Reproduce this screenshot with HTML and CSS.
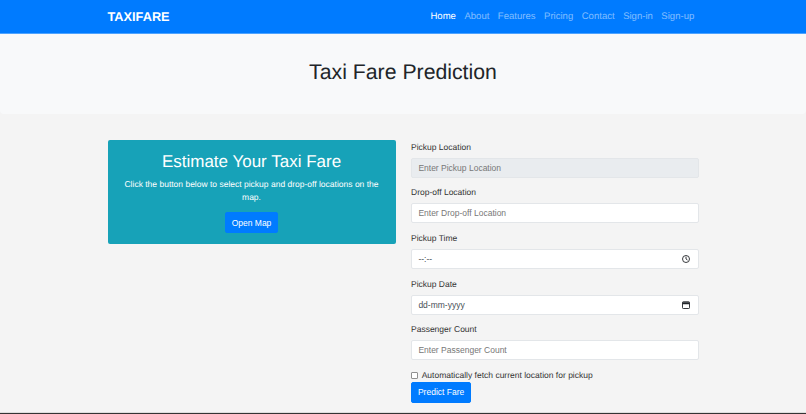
FILE: index.html
```html
<!DOCTYPE html>
<html lang="en">
<head>
	<meta charset="UTF-8">
	<title>Taxi Fare Prediction</title>
	<link rel="stylesheet" href="styles.css">
</head>
<body>
	<nav class="navbar">
		<div class="container nav-inner">
			<a class="brand" href="#">TAXIFARE</a>
			<ul class="nav-links">
				<li><a class="active" href="#">Home</a></li>
				<li><a href="#">About</a></li>
				<li><a href="#">Features</a></li>
				<li><a href="#">Pricing</a></li>
				<li><a href="#">Contact</a></li>
				<li><a href="#">Sign-in</a></li>
				<li><a href="#">Sign-up</a></li>
			</ul>
		</div>
	</nav>
	<header class="hero">
		<h1>Taxi Fare Prediction</h1>
	</header>
	<main class="container columns">
		<section class="estimate">
			<h2>Estimate Your Taxi Fare</h2>
			<p>Click the button below to select pickup and drop-off locations on the map.</p>
			<button type="button" class="btn">Open Map</button>
		</section>
		<form class="fare-form">
			<div class="form-group">
				<label for="pickup">Pickup Location</label>
				<input type="text" id="pickup" placeholder="Enter Pickup Location" disabled>
			</div>
			<div class="form-group">
				<label for="dropoff">Drop-off Location</label>
				<input type="text" id="dropoff" placeholder="Enter Drop-off Location">
			</div>
			<div class="form-group">
				<label for="time">Pickup Time</label>
				<div class="input-icon">
					<input type="text" id="time" value="--:--" readonly>
					<svg viewBox="0 0 16 16" width="8" height="8" fill="none" stroke="#212529" stroke-width="1.8">
						<circle cx="8" cy="8" r="7"/>
						<path d="M8 3.5V8l3 2"/>
					</svg>
				</div>
			</div>
			<div class="form-group">
				<label for="date">Pickup Date</label>
				<div class="input-icon">
					<input type="text" id="date" value="dd-mm-yyyy" readonly>
					<svg viewBox="0 0 16 16" width="8" height="8" fill="none" stroke="#212529" stroke-width="1.8">
						<rect x="1" y="1.5" width="14" height="13.5" rx="1.5"/>
						<path d="M1 4.5h14" stroke-width="4"/>
					</svg>
				</div>
			</div>
			<div class="form-group">
				<label for="count">Passenger Count</label>
				<input type="text" id="count" placeholder="Enter Passenger Count">
			</div>
			<div class="form-check">
				<input type="checkbox" id="auto">
				<label for="auto">Automatically fetch current location for pickup</label>
			</div>
			<button type="button" class="btn">Predict Fare</button>
		</form>
	</main>
	<footer class="footer"></footer>
</body>
</html>
```

FILE: styles.css
```css
html {
	font-size: 8.5px;
}
body {
	margin: 0;
	height: 414px;
	overflow: hidden;
	background-color: #f4f4f4;
	color: #333;
	font-family: "Liberation Sans", Arial, sans-serif;
	font-size: 1rem;
	line-height: 1.5;
	text-rendering: geometricPrecision;
}
.container {
	width: 591px;
	margin: 0 auto;
}
.navbar {
	height: 34px;
	background-color: #007bff;
	border-bottom: 1px solid #4da3ff;
	box-sizing: border-box;
}
.nav-inner {
	display: flex;
	align-items: center;
	justify-content: space-between;
	height: 33px;
}
.brand {
	color: #fff;
	font-size: 1.5rem;
	font-weight: bold;
	text-decoration: none;
}
.nav-links {
	display: flex;
	gap: 1rem;
	margin: 0;
	padding: 2px 0.5rem 0 0;
	list-style: none;
}
.nav-links a {
	color: rgba(255,255,255,0.5);
	font-size: 1.125rem;
	text-decoration: none;
}
.nav-links a.active {
	color: #fff;
}
.hero {
	padding: 3rem 0 29px;
	background-color: #f8f9fa;
	text-align: center;
	border-radius: 0 0 4px 4px;
}
.hero h1 {
	margin: 0;
	font-size: 2.5rem;
	font-weight: 400;
	line-height: 1.2;
	color: #212529;
}
.columns {
	display: grid;
	grid-template-columns: 288px 287.5px;
	gap: 15.5px;
	align-items: start;
	padding: 26px 0 9px;
}
.estimate {
	background-color: #17a2b8;
	color: #fff;
	text-align: center;
	border-radius: 2px;
	padding: 11.6px 1.25rem 1.25rem;
}
.estimate h2 {
	margin: 0 0 0.75rem;
	font-size: 2rem;
	font-weight: 400;
	line-height: 1.2;
}
.estimate p {
	margin: 0 0 1rem;
}
.btn {
	display: block;
	padding: 0.375rem 0.7rem;
	border: 0.5px solid #007bff;
	border-radius: 2px;
	background-color: #007bff;
	color: #fff;
	font-family: inherit;
	font-size: 1rem;
	line-height: 1.5;
}
.estimate .btn {
	margin: 0 auto;
}
.fare-form {
	padding-top: 0.5px;
}
.form-group {
	margin-bottom: 1rem;
}
.form-group label {
	display: block;
	margin-bottom: 0.5rem;
}
.form-group input {
	display: block;
	width: 100%;
	height: 20.2px;
	box-sizing: border-box;
	padding: 0 0.75rem;
	border: 1px solid #e3e6e9;
	border-radius: 2px;
	background-color: #fff;
	color: #495057;
	font-family: inherit;
	font-size: 1rem;
}
.form-group input::placeholder {
	color: #777;
}
.form-group input:disabled {
	background-color: #e9ecef;
}
.input-icon {
	position: relative;
}
.input-icon svg {
	position: absolute;
	top: 6px;
	right: 8.5px;
}
.form-check {
	display: flex;
	align-items: center;
	gap: 3.7px;
}
.form-check input {
	appearance: none;
	box-sizing: border-box;
	margin: 0;
	width: 7px;
	height: 7px;
	border: 1px solid #909090;
	border-radius: 1px;
	background-color: #fff;
}
.footer {
	height: 2px;
	border-top: 1px solid #ddd;
	background-color: #333;
}
```
